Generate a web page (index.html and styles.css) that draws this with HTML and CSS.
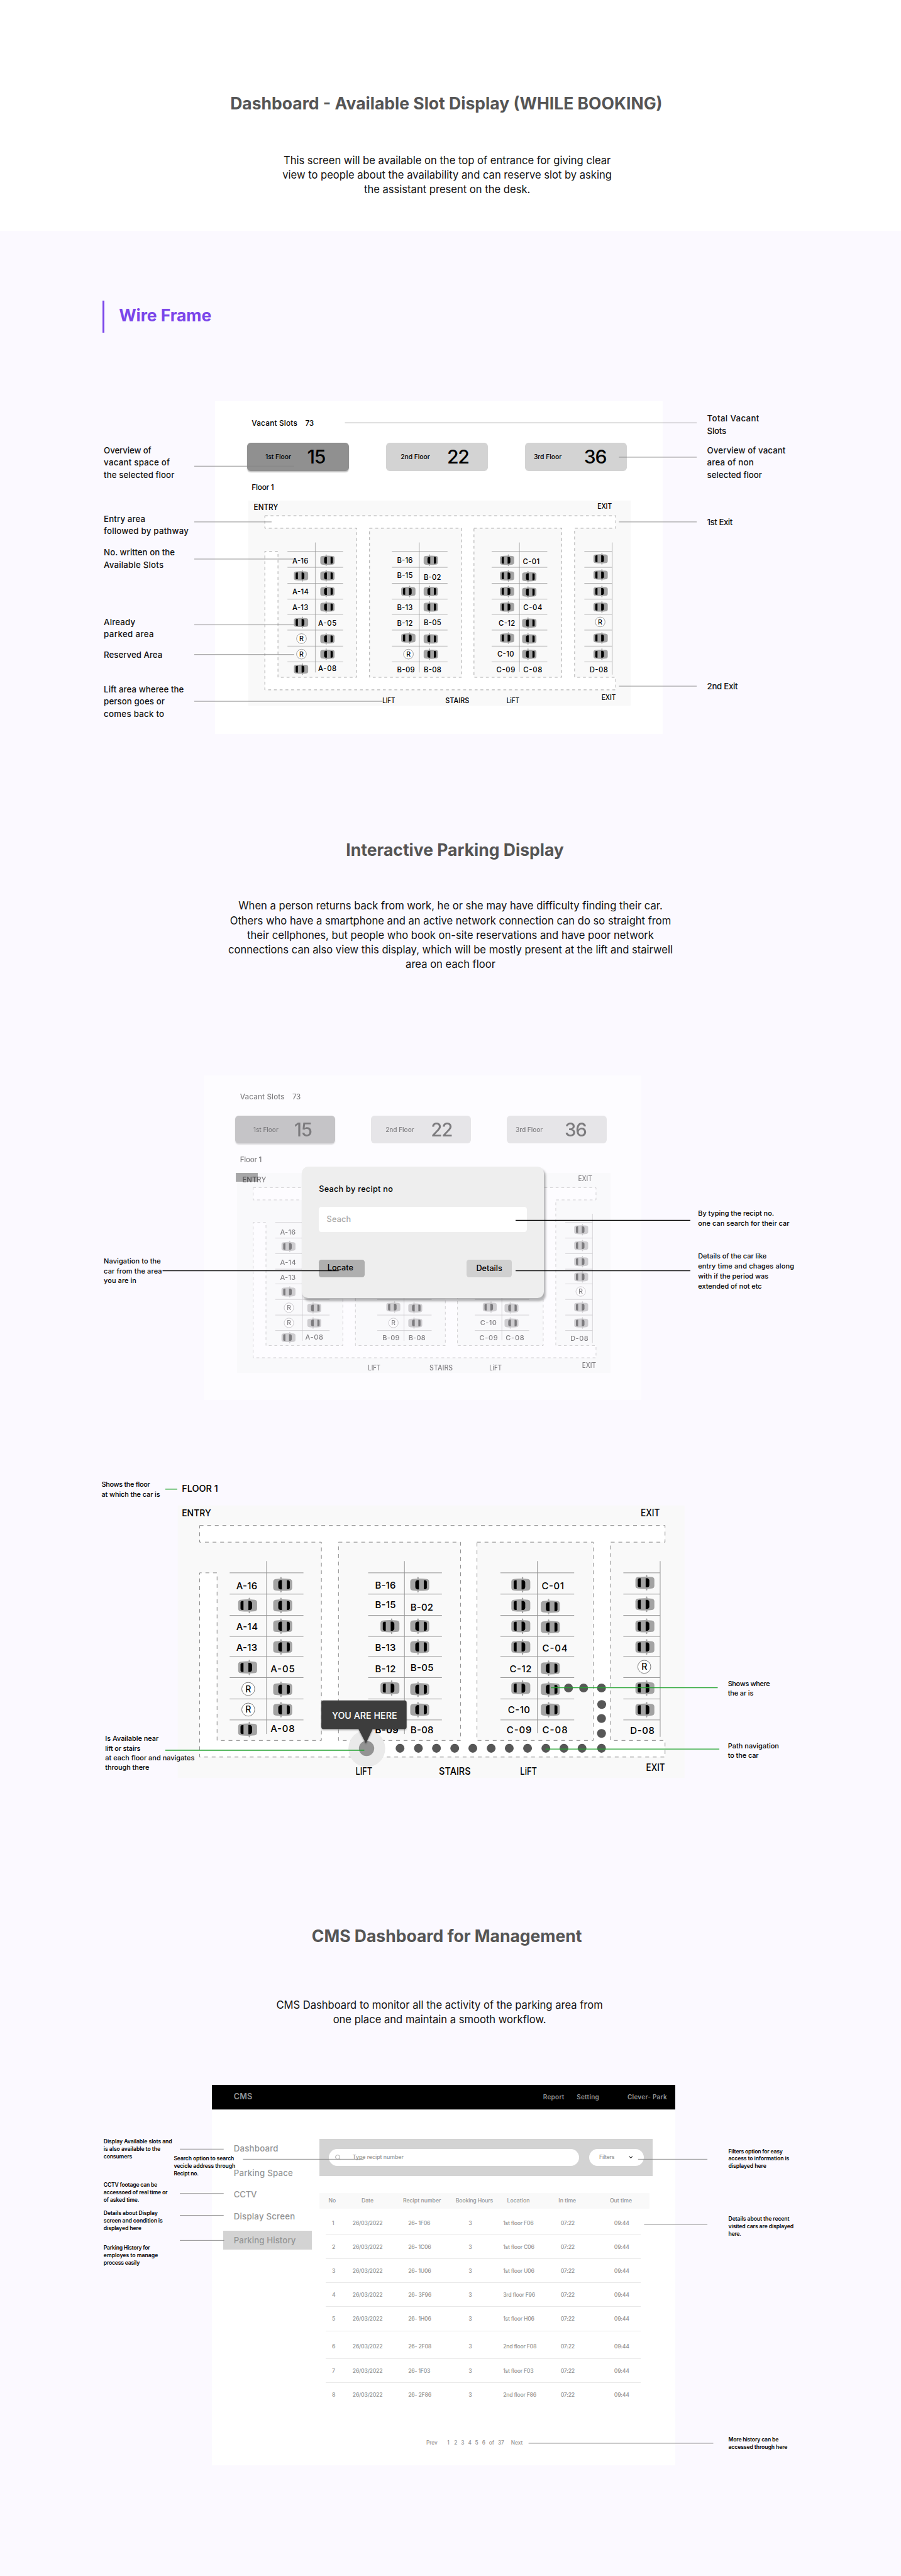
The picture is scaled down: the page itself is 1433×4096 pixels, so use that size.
FILE: index.html
```html
<!DOCTYPE html>
<html lang="en">
<head>
<meta charset="utf-8">
<title>Clever-Park – Wire Frames</title>
<link rel="stylesheet" href="styles.css">
</head>
<body>

<!-- Shared drawings: a parked car (two orientations), a reserved slot and the floor plan -->
<svg class="sprites" aria-hidden="true">
  <defs>
    <g id="car">
      <rect x="1.5" y="-11.2" width="2" height="22.4" rx="1" fill="#a3a3a3"/>
      <path d="M-10.3-8.2Q0-9.5 10.3-8.2Q13.7-7.6 13.7-4.2V4.2Q13.7 7.6 10.3 8.2Q0 9.5-10.3 8.2Q-13.7 7.6-13.7 4.2V-4.2Q-13.7-7.6-10.3-8.2Z" fill="#a3a3a3"/>
      <path d="M-6-6.5V6.5H-8.2Q-10 6.300-10.3 4.500V-4.500Q-10-6.300-8.200-6.500ZM1.100-6.600H3.800Q6.400-5.600 6.400-3.600V3.600Q6.400 5.600 3.800 6.600H1.100Z" fill="#000"/>
    </g>
    <g id="car-r"><use href="#car" transform="scale(-1 1)"/></g>
    <g id="res">
      <circle r="9.400" fill="#fff" stroke="#555" stroke-width=".7"/>
      <text class="res" y="4.600" text-anchor="middle">R</text>
    </g>

    <g id="plan">
      <rect width="733" height="393" fill="#f9f9f9"/>
      <path class="road" fill-rule="evenodd" d="M31.600 29H704.700V53H625.700V338.800H704.700V362.800H31.600V97.200H56.800V338.800H207.700V53H31.600ZM232.400 53H408.900V338.800H232.400ZM432.700 53H601V338.800H432.700Z"/>
      <path class="bays" d="M75 97.200H181.700M75 127.900H181.700M75 158.600H181.700M75 188.900H181.700M75 217.900H181.700M75 248.300H181.700M75 279H181.700M75 309.300H181.700M128.300 80.300V329.500
        M275.300 97.200H382M275.300 127.900H382M275.300 158.600H382M275.300 188.900H382M275.300 217.900H382M275.300 248.300H382M275.300 279H382M275.300 309.300H382M327.800 80.300V329.500
        M466.600 97.200H573.300M466.600 127.900H573.300M466.600 158.600H573.300M466.600 188.900H573.300M466.600 217.900H573.300M466.600 248.300H573.300M466.600 279H573.300M466.600 309.300H573.300M519.900 80.300V328.500
        M644.400 97.200H697.700M644.400 127.900H697.700M644.400 158.600H697.700M644.400 188.900H697.700M644.400 217.900H697.700M644.400 248.300H697.700M644.400 279H697.700M644.400 309.300H697.700M697.700 80.300V333.700"/>

      <use href="#car" x="101" y="144.300"/><use href="#car" x="101" y="233.600"/><use href="#car" x="101" y="323.200"/>
      <use href="#car-r" x="151.700" y="114.400"/><use href="#car-r" x="151.700" y="144.300"/><use href="#car-r" x="151.700" y="174.200"/><use href="#car-r" x="151.700" y="204.100"/><use href="#car-r" x="151.700" y="265.100"/><use href="#car-r" x="151.700" y="294.600"/>
      <use href="#car" x="306.800" y="174.200"/><use href="#car" x="306.800" y="263.400"/>
      <use href="#car-r" x="349.900" y="114.400"/><use href="#car-r" x="349.900" y="174.200"/><use href="#car-r" x="349.900" y="204.100"/><use href="#car-r" x="349.900" y="265.100"/><use href="#car-r" x="349.900" y="294.600"/>
      <use href="#car" x="496.100" y="114.400"/><use href="#car" x="496.100" y="144.300"/><use href="#car" x="496.100" y="174.200"/><use href="#car" x="496.100" y="204.100"/><use href="#car" x="496.100" y="263.400"/>
      <use href="#car-r" x="538.800" y="146"/><use href="#car-r" x="538.800" y="175.500"/><use href="#car-r" x="538.800" y="234.800"/><use href="#car-r" x="538.800" y="265.100"/><use href="#car-r" x="538.800" y="294.600"/>
      <use href="#car" x="675.600" y="111.500"/><use href="#car" x="675.600" y="142.600"/><use href="#car" x="675.600" y="174.200"/><use href="#car" x="675.600" y="204.100"/><use href="#car" x="675.600" y="263.400"/><use href="#car" x="675.600" y="294.600"/>
      <use href="#res" x="101.900" y="264.600"/><use href="#res" x="101.900" y="294.400"/><use href="#res" x="307" y="294.400"/><use href="#res" x="674.700" y="232.700"/>

      <g class="slot">
        <text x="84.500" y="120.700" textLength="30.400">A-16</text><text x="84.500" y="179.700" textLength="31.200">A-14</text><text x="84.500" y="209.500" textLength="30.400">A-13</text>
        <text x="134" y="240.300" textLength="35.100">A-05</text><text x="134" y="326.600" textLength="35.100">A-08</text>
        <text x="285.300" y="119.900" textLength="29.900">B-16</text><text x="285.300" y="148.500" textLength="29.900">B-15</text><text x="285.300" y="210" textLength="29.900">B-13</text><text x="285.300" y="240.300" textLength="29.900">B-12</text><text x="285.300" y="328.700" textLength="33.800">B-09</text>
        <text x="336.500" y="151.500" textLength="33">B-02</text><text x="336.500" y="239" textLength="33.400">B-05</text><text x="336.500" y="328.700" textLength="33.400">B-08</text>
        <text x="526.400" y="121.200" textLength="32.100">C-01</text><text x="527.300" y="210.400" textLength="36.400">C-04</text><text x="480" y="240.300" textLength="31.700">C-12</text><text x="477.400" y="299.200" textLength="32.100">C-10</text><text x="475.700" y="328.700" textLength="36">C-09</text><text x="527.300" y="328.700" textLength="36.400">C-08</text>
        <text x="654.400" y="329.500" textLength="35.100">D-08</text>
      </g>
      <g class="gate">
        <text x="669.500" y="15.500" textLength="27.700" lengthAdjust="spacingAndGlyphs">EXIT</text>
        <text x="677.300" y="382.500" textLength="27.400" lengthAdjust="spacingAndGlyphs">EXIT</text>
        <text x="257.100" y="388" textLength="24.300" lengthAdjust="spacingAndGlyphs">LIFT</text>
        <text x="377.700" y="388" textLength="45.900" lengthAdjust="spacingAndGlyphs">STAIRS</text>
        <text x="495.200" y="388" textLength="24.300" lengthAdjust="spacingAndGlyphs">LiFT</text>
      </g>
    </g>
  </defs>
</svg>

<main class="page">
  <header class="intro">
    <h1 class="title title--booking">Dashboard - Available Slot Display (WHILE BOOKING)</h1>
    <p class="lead lead--booking">This screen will be available on the top of entrance for giving clear<br>view to people about the availability and can reserve slot by asking<br>the assistant present on the desk.</p>
  </header>

  <section class="block">
    <h2 class="tag">Wire Frame</h2>

    <figure class="board board--booking">
      <div class="screen">
        <div class="screen__vacant"><span>Vacant Slots</span><span class="num">73</span></div>
        <div class="tiles">
          <div class="tile tile--on"><span class="tile__name">1st Floor</span><b class="tile__count">15</b></div>
          <div class="tile tile--2"><span class="tile__name">2nd Floor</span><b class="tile__count">22</b></div>
          <div class="tile tile--3"><span class="tile__name">3rd Floor</span><b class="tile__count">36</b></div>
        </div>
        <div class="screen__floor">Floor 1</div>
        <svg class="map" viewBox="0 0 733 393">
          <use href="#plan"/>
          <text class="entry" x="10.400" y="18" textLength="46.800" lengthAdjust="spacingAndGlyphs">ENTRY</text>
        </svg>
      </div>
      <svg class="notes" viewBox="0 769 1728 638">
        <path class="leader" d="M372.600 893.500H564.300M372.600 1000.400H520.900M372.600 1071.600H564.300M372.600 1197.800H564.300M372.600 1254.700H564.300M372.600 1344.300H733.800M661.400 810.600H1336.200M1187 876.300H1336.200M1187 1000.400H1336.200M1187 1315.300H1336.200"/>
        <g class="note">
          <text x="199.100" y="869.100" textLength="91">Overview of</text>
          <text x="199.100" y="892.300" textLength="126.600">vacant space of</text>
          <text x="199.100" y="915.800" textLength="135.300">the selected floor</text>
          <text x="199.100" y="1000.900" textLength="79.400">Entry area</text>
          <text x="199.100" y="1024" textLength="162.600">followed by pathway</text>
          <text x="199.100" y="1064.800" textLength="136.200">No. written on the</text>
          <text x="199.100" y="1088.400" textLength="114.500">Available Slots</text>
          <text x="199.100" y="1198.300" textLength="60.300">Already</text>
          <text x="199.100" y="1221.400" textLength="95.800">parked area</text>
          <text x="199.100" y="1261.400" textLength="112.300">Reserved Area</text>
          <text x="199.100" y="1327" textLength="153.500">Lift area wheree the</text>
          <text x="199.100" y="1350.600" textLength="116.700">person goes or</text>
          <text x="199.100" y="1373.800" textLength="115.800">comes back to</text>
          <text x="1356.100" y="808.100" textLength="99.800">Total Vacant</text>
          <text x="1356.100" y="831.200" textLength="36.900">Slots</text>
          <text x="1356.100" y="869.100" textLength="150.500">Overview of vacant</text>
          <text x="1356.100" y="892.300" textLength="89.300">area of non</text>
          <text x="1356.100" y="915.800" textLength="105.400">selected floor</text>
          <text x="1356.100" y="1006.300" textLength="49">1st Exit</text>
          <text x="1356.100" y="1321.200" textLength="59">2nd Exit</text>
        </g>
      </svg>
    </figure>
  </section>

  <section class="block">
    <h2 class="title title--interactive">Interactive Parking Display</h2>
    <p class="lead">When a person returns back from work, he or she may have difficulty finding their car.<br>Others who have a smartphone and an active network connection can do so straight from<br>their cellphones, but people who book on-site reservations and have poor network<br>connections can also view this display, which will be mostly present at the lift and stairwell<br>area on each floor</p>

    <figure class="board board--search">
      <div class="screen screen--dim">
        <div class="screen__vacant"><span>Vacant Slots</span><span class="num">73</span></div>
        <div class="tiles">
          <div class="tile tile--on"><span class="tile__name">1st Floor</span><b class="tile__count">15</b></div>
          <div class="tile tile--2"><span class="tile__name">2nd Floor</span><b class="tile__count">22</b></div>
          <div class="tile tile--3"><span class="tile__name">3rd Floor</span><b class="tile__count">36</b></div>
        </div>
        <div class="screen__floor">Floor 1</div>
        <svg class="map" viewBox="0 0 733 393">
          <use href="#plan"/>
          <text class="entry" x="10.400" y="18" textLength="46.800" lengthAdjust="spacingAndGlyphs">ENTRY</text>
        </svg>
      </div>
      <i class="smudge"></i>
      <div class="popup">
        <div class="popup__title">Seach by recipt no</div>
        <div class="popup__input">Seach</div>
        <div class="popup__actions">
          <span class="btn btn--locate">Locate</span>
          <span class="btn btn--details">Details</span>
        </div>
      </div>
      <svg class="notes" viewBox="0 2061.500 1728 623.300">
        <path class="leader leader--black" d="M311.800 2436.100H649.300M988.800 2339.300H1324M988.800 2436.100H1324"/>
        <g class="note note--small">
          <text x="199.100" y="2422.200" textLength="109.300">Navigation to the</text>
          <text x="199.100" y="2441.100" textLength="111.500">car from the area</text>
          <text x="199.100" y="2460" textLength="62.500">you are in</text>
          <text x="1338.800" y="2330.400" textLength="145.700">By typing the recipt no.</text>
          <text x="1338.800" y="2349.400" textLength="175.200">one can search for their car</text>
          <text x="1338.800" y="2412.500" textLength="131.400">Details of the car like</text>
          <text x="1338.800" y="2431.400" textLength="184.300">entry time and chages along</text>
          <text x="1338.800" y="2450.800" textLength="134.900">with if the period was</text>
          <text x="1338.800" y="2469.700" textLength="122.300">extended of not etc</text>
        </g>
      </svg>
    </figure>

    <figure class="board board--path">
      <svg class="path-map" viewBox="0 2830 1728 580">
        <defs>
          <filter id="soft" x="-10%" y="-20%" width="120%" height="150%"><feDropShadow dx="0" dy="2" stdDeviation="1.500" flood-opacity=".35"/></filter>
        </defs>
        <use href="#plan" transform="translate(341 2886.300) scale(1.326 1.330)"/>
        <circle cx="703.500" cy="3352.500" r="35.300" fill="#eaeaea"/>
        <text class="slot slot--big" x="719.300" y="3323.500" textLength="44.800">B-09</text>
        <text class="big" x="348.700" y="2859.800" textLength="69.400" lengthAdjust="spacingAndGlyphs">FLOOR 1</text>
        <text class="big" x="348.700" y="2906.900" textLength="56" lengthAdjust="spacingAndGlyphs">ENTRY</text>
        <g fill="#575757">
          <circle cx="767.200" cy="3352" r="8.500"/><circle cx="802.400" cy="3352" r="8.500"/><circle cx="837.100" cy="3352" r="8.500"/><circle cx="872.100" cy="3352" r="8.500"/><circle cx="906.800" cy="3352" r="8.500"/><circle cx="942" cy="3352" r="8.500"/><circle cx="976.700" cy="3352" r="8.500"/><circle cx="1011.800" cy="3352" r="8.500"/><circle cx="1046.900" cy="3352" r="8.500"/><circle cx="1081.600" cy="3352" r="8.500"/><circle cx="1116.300" cy="3352" r="8.500"/><circle cx="1153.600" cy="3352" r="8.500"/>
          <circle cx="1153.600" cy="3323.600" r="8.500"/><circle cx="1153.600" cy="3294.900" r="8.500"/><circle cx="1154" cy="3268.100" r="8.500"/><circle cx="1153.600" cy="3236.400" r="8.500"/><circle cx="1119.300" cy="3236.400" r="8.500"/><circle cx="1090.300" cy="3236.400" r="8.500"/>
        </g>
        <circle cx="703" cy="3352.300" r="14.700" fill="#939393"/>
        <path filter="url(#soft)" fill="#3e3e3e" d="M620.300 3260.100H775.800Q779.800 3260.100 779.800 3264.100V3311.200Q779.800 3315.200 775.800 3315.200H714.700L701.700 3342.400L687.400 3315.200H620.300Q616.300 3315.200 616.300 3311.200V3264.100Q616.300 3260.100 620.300 3260.100Z"/>
        <text class="here" x="636.700" y="3295.700" textLength="124.900" lengthAdjust="spacingAndGlyphs">YOU ARE HERE</text>
        <path class="leader leader--green" d="M317 2855.200H340M317 3355.800H698.700M1056.500 3236H1376.500M1046.500 3353.500H1379.600"/>
        <g class="note note--small">
          <text x="194.700" y="2851" textLength="93.200">Shows the floor</text>
          <text x="194.700" y="2869.400" textLength="112.300">at which the car is</text>
          <text x="201.700" y="3338.200" textLength="102.400">Is Available near</text>
          <text x="201.700" y="3356.500" textLength="67.700">lift or stairs</text>
          <text x="201.700" y="3374.900" textLength="171.300">at each floor and navigates</text>
          <text x="201.700" y="3393.300" textLength="84.600">through there</text>
          <text x="1396" y="3232.900" textLength="80.700">Shows where</text>
          <text x="1396" y="3250.900" textLength="49">the ar is</text>
          <text x="1396" y="3352" textLength="98">Path navigation</text>
          <text x="1396" y="3370.300" textLength="59">to the car</text>
        </g>
      </svg>
    </figure>
  </section>

  <section class="block">
    <h2 class="title title--cms">CMS Dashboard for Management</h2>
    <p class="lead lead--cms">CMS Dashboard to monitor all the activity of the parking area from<br>one place and maintain a smooth workflow.</p>

    <figure class="board board--cms">
      <div class="cms">
        <div class="cms__bar">
          <strong class="cms__logo">CMS</strong>
          <span class="cms__link">Report</span>
          <span class="cms__link cms__link--setting">Setting</span>
          <span class="cms__brand">Clever- Park</span>
        </div>
        <div class="cms__body">
          <nav class="side">
            <a class="side__item">Dashboard</a>
            <a class="side__item side__item--space">Parking Space</a>
            <a class="side__item side__item--cctv">CCTV</a>
            <a class="side__item side__item--screen">Display Screen</a>
            <a class="side__item side__item--on">Parking History</a>
          </nav>
          <div class="main">
            <div class="search">
              <div class="search__field">
                <svg class="search__icon" viewBox="0 0 11 11"><circle cx="5" cy="5" r="4.300"/><path d="M8 8L10.200 10.300"/></svg>
                <span>Type recipt number</span>
              </div>
              <div class="search__filter">
                <span>Filters</span>
                <svg class="search__chev" viewBox="0 0 8 5"><path d="M.8.8L4 4L7.200.8"/></svg>
              </div>
            </div>
            <div class="thead"><span>No</span><span>Date</span><span>Recipt number</span><span class="tight">Booking Hours</span><span>Location</span><span>In time</span><span>Out time</span></div>
            <div class="row row--first"><span>1</span><span>26/03/2022</span><span>26- 1F06</span><span>3</span><span>1st floor F06</span><span>07:22</span><span>09:44</span></div>
            <div class="row"><span>2</span><span>26/03/2022</span><span>26- 1C06</span><span>3</span><span>1st floor C06</span><span>07:22</span><span>09:44</span></div>
            <div class="row"><span>3</span><span>26/03/2022</span><span>26- 1U06</span><span>3</span><span>1st floor U06</span><span>07:22</span><span>09:44</span></div>
            <div class="row"><span>4</span><span>26/03/2022</span><span>26- 3F96</span><span>3</span><span>3rd floor F96</span><span>07:22</span><span>09:44</span></div>
            <div class="row"><span>5</span><span>26/03/2022</span><span>26- 1H06</span><span>3</span><span>1st floor H06</span><span>07:22</span><span>09:44</span></div>
            <div class="row row--sixth"><span>6</span><span>26/03/2022</span><span>26- 2F08</span><span>3</span><span>2nd floor F08</span><span>07:22</span><span>09:44</span></div>
            <div class="row"><span>7</span><span>26/03/2022</span><span>26- 1F03</span><span>3</span><span>1st floor F03</span><span>07:22</span><span>09:44</span></div>
            <div class="row row--last"><span>8</span><span>26/03/2022</span><span>26- 2F86</span><span>3</span><span>2nd floor F86</span><span>07:22</span><span>09:44</span></div>
            <div class="pager"><span class="pager__prev">Prev</span><span>1</span><span>2</span><span>3</span><span>4</span><span>5</span><span>6</span><span class="pager__of">of</span><span class="pager__total">37</span><span>Next</span></div>
          </div>
        </div>
      </div>
      <svg class="notes" viewBox="0 3997 1728 730">
        <path class="leader" d="M345 4120.300H429M345 4205.300H429M345 4247.300H429M345 4295.300H430M466 4139.700H697.300M1223.700 4139.700H1356.700M1235.300 4264.700H1356.700M1013.700 4684.300H1368"/>
        <g class="note note--bold">
          <text x="198.700" y="4109.700" textLength="131.300">Display Available slots and</text>
          <text x="198.700" y="4124" textLength="109">is also available to the</text>
          <text x="198.700" y="4138.300" textLength="54.700">consumers</text>
          <text x="333.300" y="4141.300" textLength="115.700">Search option to search</text>
          <text x="333.300" y="4156" textLength="118">vecicle address through</text>
          <text x="333.300" y="4170.300" textLength="47.700">Recipt no.</text>
          <text x="198.700" y="4192.700" textLength="103">CCTV footage can be</text>
          <text x="198.700" y="4207.300" textLength="122.700">accessoed of real time or</text>
          <text x="198.700" y="4221.700" textLength="68.300">of asked time.</text>
          <text x="198.700" y="4246.300" textLength="103.700">Details about Display</text>
          <text x="198.700" y="4260.700" textLength="113.300">screen and condition is</text>
          <text x="198.700" y="4275" textLength="72.300">displayed here</text>
          <text x="198.700" y="4313" textLength="89">Parking History for</text>
          <text x="198.700" y="4327.300" textLength="104.300">employes to manage</text>
          <text x="198.700" y="4342" textLength="69.300">process easily</text>
          <text x="1397" y="4128" textLength="104">Filters option for easy</text>
          <text x="1397" y="4142.300" textLength="116.700">access to information is</text>
          <text x="1397" y="4156.700" textLength="72.700">displayed here</text>
          <text x="1397" y="4257.700" textLength="117">Details about the recent</text>
          <text x="1397" y="4272.300" textLength="125">visited cars are displayed</text>
          <text x="1397" y="4286.700" textLength="24.300">here.</text>
          <text x="1397" y="4680.300" textLength="96.200">More history can be</text>
          <text x="1397" y="4694.600" textLength="113.200">accessed through here</text>
        </g>
      </svg>
    </figure>
  </section>
</main>
</body>
</html>
```
FILE: styles.css
```css
/* 1rem = 10 units of the 1728-wide artboard */
html { font-size: calc(100vw / 172.8); }
* { box-sizing: border-box; }
body {
  margin: 0;
  background: #fbf9ff;
  color: #000;
  font-family: Inter, "Liberation Sans", sans-serif;
}
h1, h2, p, figure { margin: 0; }
.sprites { position: absolute; width: 0; height: 0; }
.page { display: flow-root; height: 493.9rem; overflow: hidden; }

/* headings */
.intro { height: 44.3rem; padding-top: 17.9rem; background: #fff; }
.title {
  color: #555;
  font-size: 3.2rem;
  font-weight: 700;
  line-height: 4rem;
  text-align: center;
}
.title--booking { padding-right: 1.6rem; }
.title--interactive { padding-left: 1.7rem; }
.title--cms { padding-right: 1.4rem; }
.lead {
  margin-top: 7.43rem;
  color: #111;
  font-size: 2rem;
  line-height: 2.8rem;
  text-align: center;
}
.lead--booking { margin-top: 7.5rem; padding-right: 1.3rem; }
.lead--cms { margin-top: 9.86rem; padding-right: 4.2rem; }
.tag {
  margin: 13.4rem 0 0 19.7rem;
  padding: 0 0 .46rem 2.75rem;
  border-left: .4rem solid #7b46ea;
  color: #7b46ea;
  font-size: 3.2rem;
  font-weight: 700;
  line-height: 5.64rem;
  letter-spacing: -.003em;
}
.block { display: flow-root; }

/* annotated boards */
.board { position: relative; display: flow-root; }
.board--booking { height: 63.8rem; margin-top: 13.1rem; }
.board--search { height: 62.33rem; margin-top: 19.78rem; }
.board--path { height: 58rem; margin-top: 14.52rem; }
.board--cms { height: 73rem; margin-top: 11rem; }
.title--interactive { margin-top: 20.24rem; }
.title--cms { margin-top: 28.24rem; }

.notes { position: absolute; inset: 0; width: 100%; height: 100%; }
.note { font-size: 16px; font-weight: 500; fill: #111; }
.note--small { font-size: 13.2px; fill: #000; }
.note--bold { font-size: 10.4px; font-weight: 600; fill: #000; }
.leader { fill: none; stroke: #868686; stroke-width: 1.1; }
.leader--black { stroke: #000; stroke-width: 1.6; }
.leader--green { stroke: #22a32f; stroke-width: 1.6; }

/* parking plan */
.road { fill: #fff; stroke: #8c8c8c; stroke-width: .9; stroke-dasharray: 5.5; }
.bays { fill: none; stroke: #959595; stroke-width: .9; }
.slot { font-size: 13.6px; font-weight: 500; }
.slot--big { font-size: 18px; }
.gate { font-size: 13.9px; font-weight: 500; }
.entry { font-size: 15px; font-weight: 500; }
.res { font-size: 12.8px; font-weight: 500; }
.big { font-size: 18px; font-weight: 500; }
.here { font-size: 17.6px; font-weight: 500; fill: #fff; }
.path-map { display: block; width: 100%; height: 58rem; }

/* booking screen */
.screen {
  width: 85.9rem;
  height: 63.8rem;
  margin-left: 41.2rem;
  padding-top: 3.32rem;
  background: #fff;
  font-size: 1.43rem;
  font-weight: 500;
  line-height: 2rem;
}
.screen--dim { zoom: .977; margin-left: 40.04rem; opacity: .5; }
.screen__vacant { display: flex; gap: 1.5rem; padding-left: 7.07rem; letter-spacing: .015em; }
.screen__vacant .num { letter-spacing: -.03em; }
.tiles { display: flex; gap: 7.1rem; margin: 2.63rem 0 0 6.16rem; }
.tile {
  display: flex;
  width: 19.56rem;
  height: 5.5rem;
  padding-left: 2.82rem;
  border-radius: .7rem;
  background: #d3d3d3;
  line-height: 5.5rem;
}
.tile__name { width: 8.9rem; font-size: 1.25rem; letter-spacing: -.005em; }
.tile__count { font-size: 3.64rem; font-weight: 500; letter-spacing: -.04em; }
.tile--on { padding-left: 3.52rem; background: #909090; box-shadow: 0 .2rem .2rem rgba(0, 0, 0, .25); }
.tile--on .tile__name { width: 8.02rem; }
.tile--3 { padding-left: 1.69rem; }
.tile--3 .tile__name { width: 9.63rem; }
.screen__floor { margin-top: 2.16rem; padding-left: 7.07rem; letter-spacing: -.02em; }
.map { display: block; width: 73.3rem; height: 39.3rem; margin: 1.54rem 0 0 6.47rem; }

/* receipt search popup */
.smudge {
  position: absolute;
  left: 45.19rem;
  top: 18.77rem;
  width: 4.25rem;
  height: 1.68rem;
  background: rgba(0, 0, 0, .33);
}
.popup {
  position: absolute;
  left: 57.86rem;
  top: 17.55rem;
  width: 46.44rem;
  height: 25.21rem;
  padding: 3.33rem 3.3rem 0;
  border-radius: 1.2rem;
  background: #eee;
  box-shadow: .3rem .5rem .4rem rgba(0, 0, 0, .28);
  font-size: 1.53rem;
  font-weight: 500;
  line-height: 2rem;
}
.popup__title { letter-spacing: .022em; }
.popup__input {
  height: 4.84rem;
  margin-top: 2.41rem;
  padding-left: 1.5rem;
  border-radius: .5rem;
  background: #fff;
  color: #a9a9a9;
  line-height: 4.84rem;
  letter-spacing: .014em;
}
.popup__actions { display: flex; justify-content: space-between; margin: 5.26rem 2.8rem 0 0; }
.btn { width: 8.74rem; height: 3.37rem; border-radius: .5rem; background: #d0d0d0; text-align: center; line-height: 3.33rem; }
.btn--locate { background: #afafaf; padding-right: .5rem; line-height: 3.2rem; }

/* CMS screen */
.cms { width: 88.87rem; height: 73rem; margin-left: 40.63rem; background: #fff; color: #949494; font-weight: 500; line-height: 2rem; }
.cms__bar {
  display: flex;
  align-items: center;
  height: 4.83rem;
  padding: 0 1.57rem 0 4.2rem;
  border-bottom: .1rem solid #c4c4c4;
  background: #000;
  font-size: 1.2rem;
  font-weight: 600;
  letter-spacing: .028em;
}
.cms__logo { margin-right: auto; font-size: 1.52rem; font-weight: 600; letter-spacing: .013em; }
.cms__link--setting { margin: 0 5.4rem 0 2.37rem; }
.cms__body { display: grid; grid-template-columns: 16.9rem 63.9rem; gap: 1.53rem; padding-left: 2.24rem; }
.side { display: flex; flex-direction: column; padding-top: 6.47rem; font-size: 1.6rem; letter-spacing: .016em; }
.side__item { padding-left: 1.96rem; }
.side__item--space { margin-top: 2.63rem; }
.side__item--cctv { margin-top: 2.2rem; letter-spacing: -.02em; }
.side__item--screen { margin-top: 2.13rem; }
.side__item--on { margin-top: 1.84rem; height: 3.53rem; padding-top: .76rem; background: #d3d3d3; letter-spacing: .007em; }
.main { padding-top: 5.57rem; font-size: 1.05rem; }
.search { display: flex; gap: 1.97rem; height: 7.1rem; padding: 1.9rem 0 1.9rem 1.77rem; background: #d3d3d3; line-height: 3.3rem; }
.search__field { display: flex; align-items: center; gap: 2.27rem; width: 47.96rem; padding-left: 1.23rem; border-radius: 1.65rem; background: #fff; }
.search__icon { width: 1.06rem; height: 1.06rem; fill: none; stroke: #949494; stroke-width: 1; }
.search__filter { display: flex; align-items: center; justify-content: space-between; width: 10.47rem; padding: 0 2.1rem 0 1.93rem; border-radius: 1.65rem; background: #fff; letter-spacing: -.025em; }
.search__chev { width: .8rem; height: .5rem; fill: none; stroke: #333; stroke-width: 1.3; }
.thead {
  display: grid;
  grid-template-columns: 6.33rem 7.97rem 10.1rem 9.87rem 9.86rem 9.84rem 1fr;
  width: 63.3rem;
  height: 3.07rem;
  margin-top: 3.27rem;
  padding-left: 1.7rem;
  background: #f9f9f9;
  line-height: 3.05rem;
}
.thead .tight { letter-spacing: -.016em; }
.row {
  display: grid;
  grid-template-columns: 3.96rem 10.67rem 11.57rem 6.63rem 11.03rem 10.27rem 1fr;
  align-items: end;
  width: 60.33rem;
  height: 4.61rem;
  margin-left: 1.2rem;
  padding: 0 0 1.15rem 1.17rem;
  border-bottom: .1rem solid #e8e8e8;
  letter-spacing: -.028em;
}
.row--first { height: 5rem; }
.row--sixth { height: 5.31rem; }
.row--last { border-color: transparent; }
.pager { display: flex; margin: 5.9rem 0 0 20.46rem; font-size: 1rem; }
.pager span { width: 1.34rem; }
.pager .pager__prev { width: 4rem; }
.pager .pager__of { width: 1.7rem; }
.pager .pager__total { width: 2.53rem; }
```
